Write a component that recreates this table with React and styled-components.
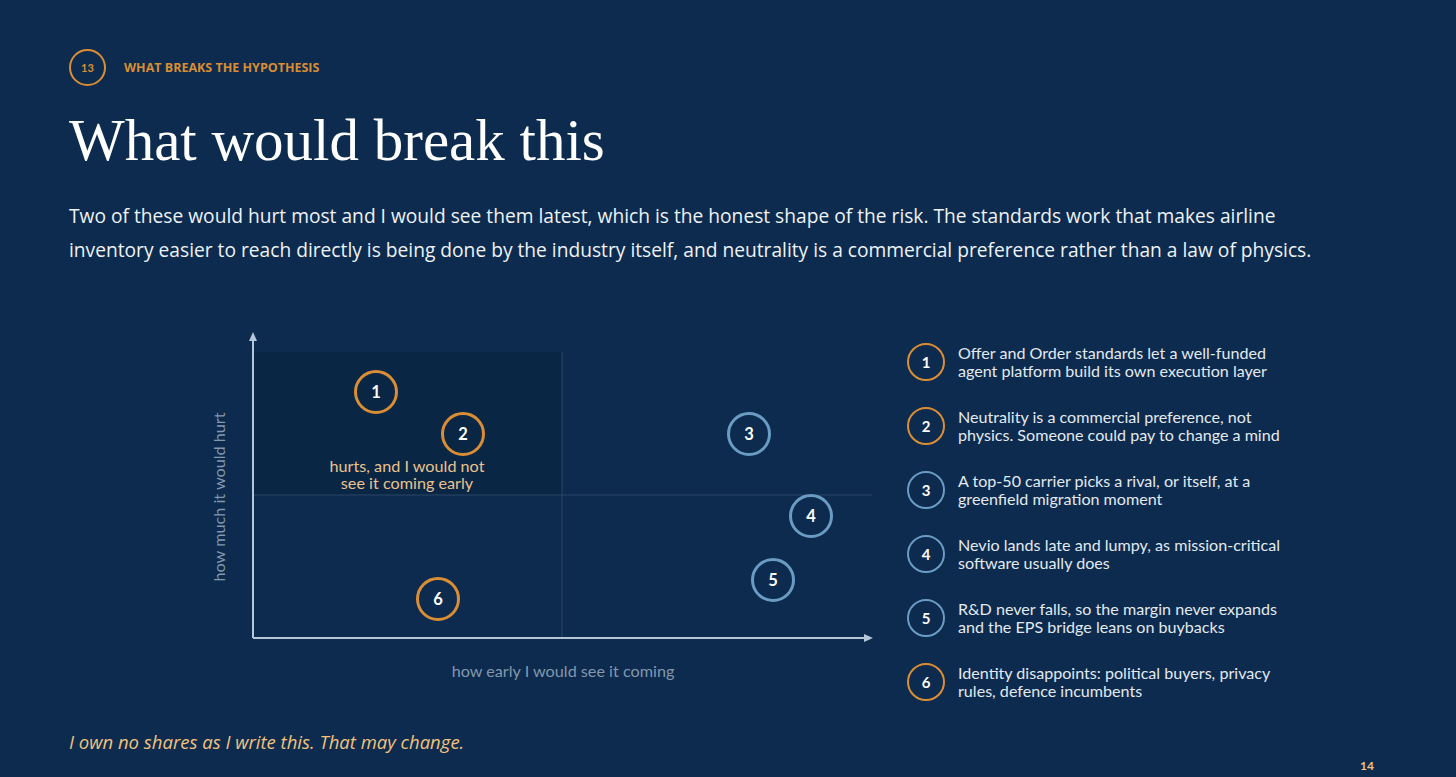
import React from 'react'
import styled, { createGlobalStyle } from 'styled-components'

const GlobalStyle = createGlobalStyle`
  html, body {
    margin: 0;
    padding: 0;
    background: #0c2b4e;
  }
  * { box-sizing: border-box; }
`

const ORANGE = '#d98d35'
const BLUE = '#6a9bc3'

const Slide = styled.div`
  width: 1456px;
  height: 777px;
  padding: 49px 76px 0 69px;
  display: flex;
  flex-direction: column;
  background: #0c2b4e;
  font-family: Lato, "Open Sans", sans-serif;
  color: #ffffff;
`

const Header = styled.div`
  display: flex;
  align-items: center;
  gap: 18px;
`

const Badge = styled.div`
  width: 37px;
  height: 37px;
  border-radius: 50%;
  border: 2px solid ${ORANGE};
  display: flex;
  align-items: center;
  justify-content: center;
  font-size: 11px;
  font-weight: 700;
  color: ${ORANGE};
`

const Kicker = styled.div`
  font-family: "Open Sans", Lato, sans-serif;
  font-size: 12.5px;
  font-weight: 700;
  color: ${ORANGE};
`

const Title = styled.h1`
  margin: 22px 0 0;
  font-family: "Liberation Serif", "DejaVu Serif", serif;
  font-weight: 400;
  font-size: 59px;
  line-height: 1.1;
  color: #ffffff;
`

const Lead = styled.p`
  margin: 26px 0 0;
  font-family: "Open Sans", Lato, sans-serif;
  font-size: 19.2px;
  line-height: 34px;
  white-space: nowrap;
  color: #eef2f7;
`

const Body = styled.div`
  display: flex;
  margin-top: 58px;
`

const Chart = styled.div`
  position: relative;
  flex: none;
  width: 680px;
  height: 365px;
  margin-left: 131px;
`

const ChartLines = styled.svg`
  position: absolute;
  inset: 0;
`

const Marker = styled.div`
  position: absolute;
  width: 44px;
  height: 44px;
  margin: -22px 0 0 -22px;
  border-radius: 50%;
  border: 3px solid ${p => (p.$tone === 'blue' ? BLUE : ORANGE)};
  display: flex;
  align-items: center;
  justify-content: center;
  font-size: 16.5px;
  font-weight: 700;
  color: #ffffff;
`

const QuadNote = styled.div`
  position: absolute;
  left: 207px;
  top: 132px;
  transform: translateX(-50%);
  white-space: nowrap;
  text-align: center;
  font-size: 16.2px;
  line-height: 17px;
  color: #e9c28e;
`

const AxisLabel = styled.div`
  position: absolute;
  white-space: nowrap;
  font-size: 16.2px;
  color: #8397ad;
  transform: ${p => (p.$vertical ? 'translate(-50%, -50%) rotate(-90deg)' : 'translate(-50%, -50%)')};
`

const Legend = styled.div`
  display: flex;
  flex-direction: column;
  gap: 26px;
  margin-left: 27px;
  padding-top: 18px;
`

const LegendItem = styled.div`
  display: flex;
  align-items: center;
  gap: 13px;
`

const LegendMark = styled.div`
  flex: none;
  width: 38px;
  height: 38px;
  border-radius: 50%;
  border: 2.5px solid ${p => (p.$tone === 'blue' ? BLUE : ORANGE)};
  display: flex;
  align-items: center;
  justify-content: center;
  font-size: 15px;
  font-weight: 700;
  color: #ffffff;
`

const LegendText = styled.div`
  font-size: 16.1px;
  line-height: 18px;
  color: #e3e9f0;
  white-space: pre-line;
`

const Footer = styled.div`
  margin-top: auto;
  display: flex;
  justify-content: space-between;
  align-items: flex-end;
  padding-bottom: 4px;
`

const Disclaimer = styled.div`
  font-family: "Open Sans", Lato, sans-serif;
  font-style: italic;
  font-size: 18.5px;
  color: #f0c27f;
  margin-bottom: 19px;
`

const PageNum = styled.div`
  font-size: 12px;
  font-weight: 700;
  color: #f0c27f;
  margin-right: 6px;
`

const markers = [
  { n: 1, x: 176, y: 67, tone: 'orange' },
  { n: 2, x: 263, y: 109, tone: 'orange' },
  { n: 3, x: 549, y: 109, tone: 'blue' },
  { n: 4, x: 611, y: 191, tone: 'blue' },
  { n: 5, x: 573, y: 255, tone: 'blue' },
  { n: 6, x: 238, y: 274, tone: 'orange' },
]

const risks = [
  { n: 1, tone: 'orange', text: 'Offer and Order standards let a well-funded\nagent platform build its own execution layer' },
  { n: 2, tone: 'orange', text: 'Neutrality is a commercial preference, not\nphysics. Someone could pay to change a mind' },
  { n: 3, tone: 'blue', text: 'A top-50 carrier picks a rival, or itself, at a\ngreenfield migration moment' },
  { n: 4, tone: 'blue', text: 'Nevio lands late and lumpy, as mission-critical\nsoftware usually does' },
  { n: 5, tone: 'blue', text: 'R&D never falls, so the margin never expands\nand the EPS bridge leans on buybacks' },
  { n: 6, tone: 'orange', text: 'Identity disappoints: political buyers, privacy\nrules, defence incumbents' },
]

const App = () => {
  return (
    <>
      <GlobalStyle />
      <Slide>
        <Header>
          <Badge>13</Badge>
          <Kicker>WHAT BREAKS THE HYPOTHESIS</Kicker>
        </Header>
        <Title>What would break this</Title>
        <Lead>
          Two of these would hurt most and I would see them latest, which is the honest shape of the risk. The standards work that makes airline
          <br />
          inventory easier to reach directly is being done by the industry itself, and neutrality is a commercial preference rather than a law of physics.
        </Lead>
        <Body>
          <Chart>
            <ChartLines width="680" height="365" viewBox="0 0 680 365">
              <rect x="53" y="27" width="309" height="143" fill="#0a2645" />
              <line x1="362" y1="27" x2="362" y2="313" stroke="#2a4667" strokeWidth="1" />
              <line x1="53" y1="170" x2="672" y2="170" stroke="#2a4667" strokeWidth="1" />
              <line x1="53" y1="14" x2="53" y2="313" stroke="#b4c6d8" strokeWidth="2" />
              <line x1="53" y1="313" x2="666" y2="313" stroke="#b4c6d8" strokeWidth="2" />
              <polygon points="53,7 49,16 57,16" fill="#b4c6d8" />
              <polygon points="673,313 664,309 664,317" fill="#b4c6d8" />
            </ChartLines>
            <QuadNote>hurts, and I would not<br />see it coming early</QuadNote>
            {markers.map(m => (
              <Marker key={m.n} $tone={m.tone} style={{ left: m.x, top: m.y }}>{m.n}</Marker>
            ))}
            <AxisLabel $vertical style={{ left: 18, top: 172 }}>how much it would hurt</AxisLabel>
            <AxisLabel style={{ left: 363, top: 345 }}>how early I would see it coming</AxisLabel>
          </Chart>
          <Legend>
            {risks.map(r => (
              <LegendItem key={r.n}>
                <LegendMark $tone={r.tone}>{r.n}</LegendMark>
                <LegendText>{r.text}</LegendText>
              </LegendItem>
            ))}
          </Legend>
        </Body>
        <Footer>
          <Disclaimer>I own no shares as I write this. That may change.</Disclaimer>
          <PageNum>14</PageNum>
        </Footer>
      </Slide>
    </>
  )
}

export default App
